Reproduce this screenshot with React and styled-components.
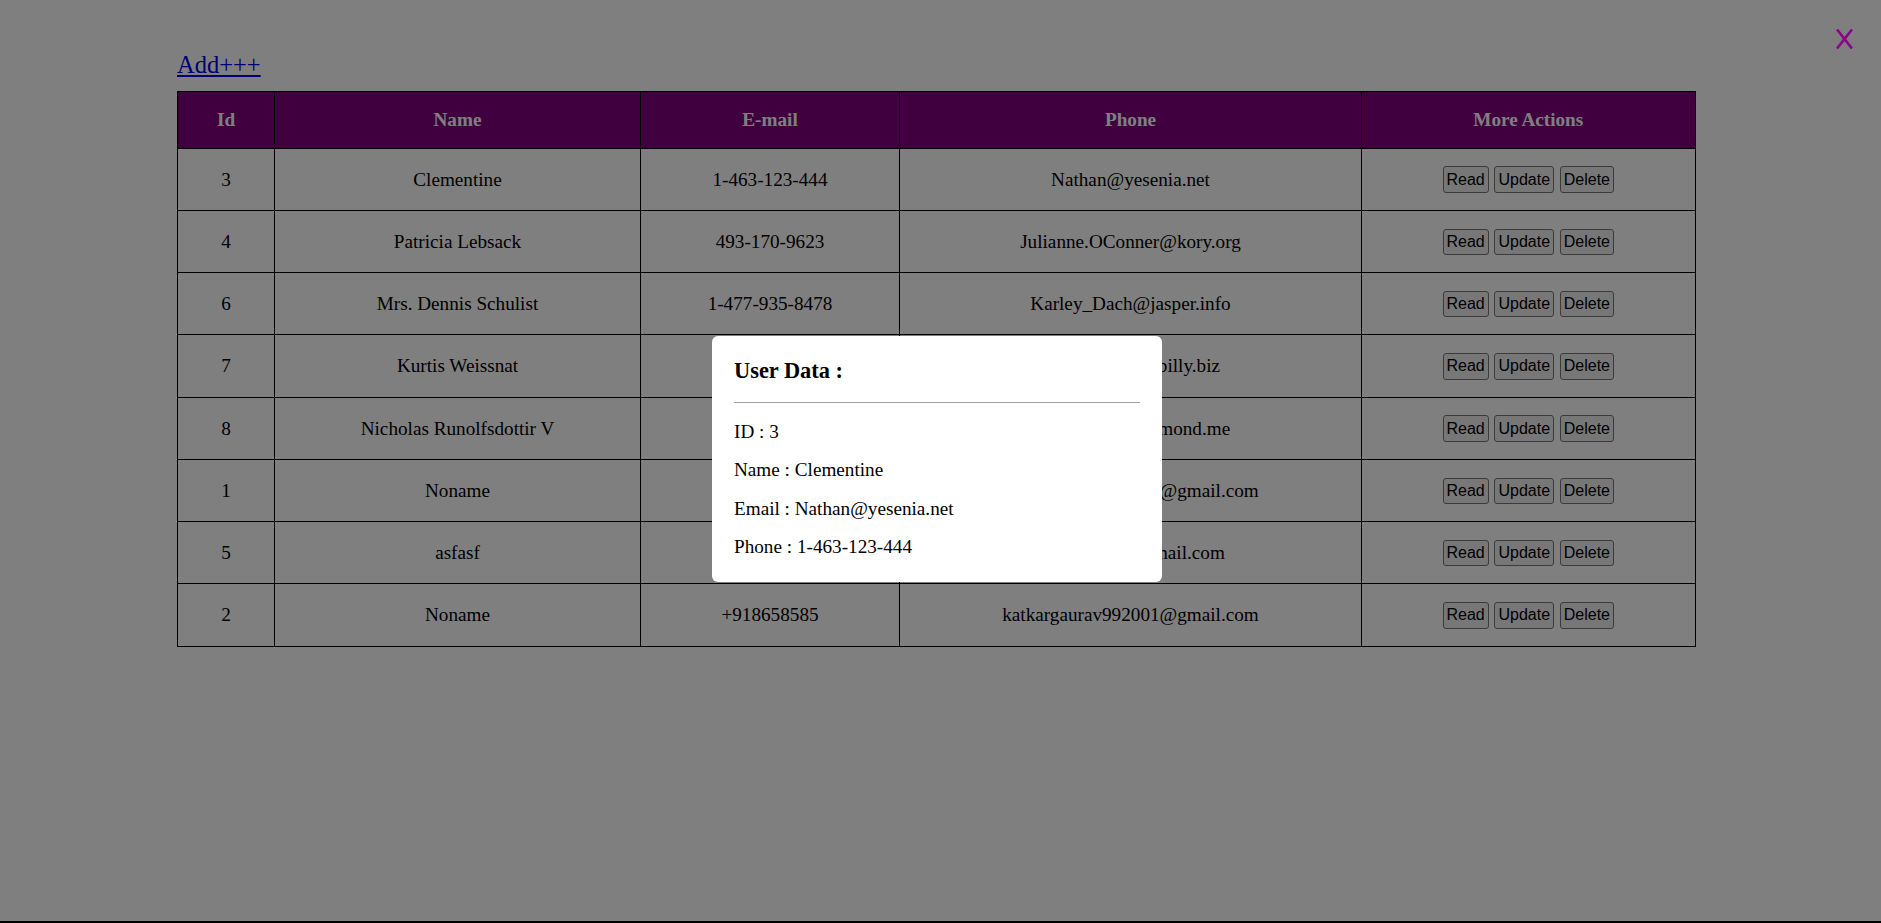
import React, { useState } from 'react';
import styled, { createGlobalStyle } from 'styled-components';

const GlobalStyle = createGlobalStyle`
  html, body {
    margin: 0;
    padding: 0;
    background: #fff;
  }
  body {
    font-family: "Liberation Serif", "Times New Roman", serif;
    font-size: 19.2px;
    color: #000;
  }
`;

const Page = styled.div`
  padding: 51px 0 0 177px;
`;

const AddLink = styled.a`
  display: block;
  width: max-content;
  font-size: 24.5px;
  color: #0000ee;
  text-decoration: underline;
  margin-bottom: 12px;
  cursor: pointer;
`;

const Table = styled.table`
  border-collapse: collapse;
  table-layout: fixed;
  width: 1518px;
`;

const HeadRow = styled.tr`
  height: 56.5px;
`;

const BodyRow = styled.tr`
  height: 62.25px;
`;

const HeadCell = styled.th`
  background: #800080;
  color: #fff;
  border: 1px solid #000;
  padding: 0;
  font-weight: bold;
  text-align: center;
  vertical-align: middle;
`;

const Cell = styled.td`
  border: 1px solid #000;
  padding: 1px 0 0;
  text-align: center;
  vertical-align: middle;
  white-space: nowrap;
`;

const Actions = styled.div`
  display: flex;
  justify-content: center;
  gap: 5.7px;
`;

const ActionButton = styled.button`
  font-family: "Liberation Sans", Arial, sans-serif;
  font-size: 16px;
  line-height: normal;
  padding: 3.3px 3px;
  background: #efefef;
  color: #000;
  border: 1px solid #767676;
  border-radius: 3px;
  cursor: pointer;
`;

const Overlay = styled.div`
  position: fixed;
  inset: 0;
  box-sizing: border-box;
  background: rgba(0, 0, 0, 0.5);
  border-bottom: 2px solid #000;
  display: flex;
  align-items: center;
  justify-content: center;
  padding: 0 7px 3px 0;
`;

const CloseButton = styled.button`
  position: absolute;
  top: 29px;
  right: 28px;
  display: flex;
  background: none;
  border: none;
  padding: 0;
  color: #8b008b;
  cursor: pointer;
`;

const Modal = styled.div`
  width: 450px;
  box-sizing: border-box;
  background: #fff;
  border-radius: 6px;
  padding: 22px 22px 24px;
`;

const ModalTitle = styled.h3`
  margin: 0 0 18px;
  font-size: 22.4px;
  font-weight: bold;
  line-height: normal;
`;

const Divider = styled.hr`
  height: 0;
  margin: 0 0 18px;
  border: none;
  border-top: 1px solid #a0a0a0;
`;

const InfoList = styled.div`
  display: flex;
  flex-direction: column;
  gap: 16.6px;
`;

const InfoLine = styled.p`
  margin: 0;
  line-height: normal;
`;

const columns = [
  { label: 'Id', width: 97 },
  { label: 'Name', width: 366 },
  { label: 'E-mail', width: 259 },
  { label: 'Phone', width: 462 },
  { label: 'More Actions', width: 333.5 },
];

const users = [
  { id: 3, name: 'Clementine', phone: '1-463-123-444', email: 'Nathan@yesenia.net' },
  { id: 4, name: 'Patricia Lebsack', phone: '493-170-9623', email: 'Julianne.OConner@kory.org' },
  { id: 6, name: 'Mrs. Dennis Schulist', phone: '1-477-935-8478', email: 'Karley_Dach@jasper.info' },
  { id: 7, name: 'Kurtis Weissnat', phone: '210.067.6132', email: 'Telly.Hoeger@billy.biz' },
  { id: 8, name: 'Nicholas Runolfsdottir V', phone: '586.493.6943', email: 'Sherwood@rosamond.me' },
  { id: 1, name: 'Noname', phone: '+918658585', email: 'katkargaurav992001@gmail.com' },
  { id: 5, name: 'asfasf', phone: '1234567890', email: 'asfasfasfasf@gmail.com' },
  { id: 2, name: 'Noname', phone: '+918658585', email: 'katkargaurav992001@gmail.com' },
];

const CloseIcon = () => (
  <svg width="17" height="20" viewBox="0 0 17 20">
    <path d="M1 0.5 L16 19.5 M16 0.5 L1 19.5" stroke="currentColor" strokeWidth="2.6" fill="none" />
  </svg>
);

const App = () => {
  const [selected, setSelected] = useState(users[0]);

  return (
    <>
      <GlobalStyle />
      <Page>
        <AddLink>Add+++</AddLink>
        <Table>
          <colgroup>
            {columns.map(c => (
              <col key={c.label} style={{ width: c.width }} />
            ))}
          </colgroup>
          <thead>
            <HeadRow>
              {columns.map(c => (
                <HeadCell key={c.label}>{c.label}</HeadCell>
              ))}
            </HeadRow>
          </thead>
          <tbody>
            {users.map(u => (
              <BodyRow key={u.id}>
                <Cell>{u.id}</Cell>
                <Cell>{u.name}</Cell>
                <Cell>{u.phone}</Cell>
                <Cell>{u.email}</Cell>
                <Cell>
                  <Actions>
                    <ActionButton onClick={() => setSelected(u)}>Read</ActionButton>
                    <ActionButton>Update</ActionButton>
                    <ActionButton>Delete</ActionButton>
                  </Actions>
                </Cell>
              </BodyRow>
            ))}
          </tbody>
        </Table>
      </Page>

      {selected && (
        <Overlay>
          <CloseButton onClick={() => setSelected(null)} aria-label="Close">
            <CloseIcon />
          </CloseButton>
          <Modal>
            <ModalTitle>User Data :</ModalTitle>
            <Divider />
            <InfoList>
              <InfoLine>ID : {selected.id}</InfoLine>
              <InfoLine>Name : {selected.name}</InfoLine>
              <InfoLine>Email : {selected.email}</InfoLine>
              <InfoLine>Phone : {selected.phone}</InfoLine>
            </InfoList>
          </Modal>
        </Overlay>
      )}
    </>
  );
};

export default App;
